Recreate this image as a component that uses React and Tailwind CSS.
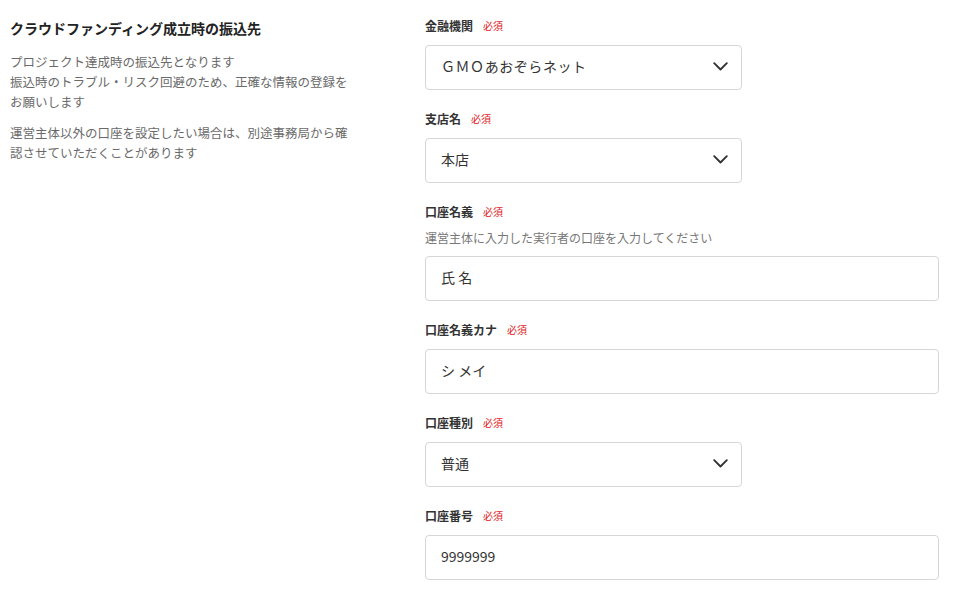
import React from "react";

const font = {
  fontFamily: '"Noto Sans CJK JP", "Noto Sans", "Liberation Sans", sans-serif',
};

function Chevron() {
  return (
    <svg width="15" height="9" viewBox="0 0 15 9" fill="none" className="shrink-0">
      <polyline
        points="1.2,1.2 7.5,7.5 13.8,1.2"
        stroke="#333333"
        strokeWidth="1.9"
        strokeLinecap="round"
        strokeLinejoin="round"
      />
    </svg>
  );
}

function FieldLabel({ children }) {
  return (
    <div className="flex items-center h-5 leading-5">
      <span className="text-[12px] font-bold text-[#333]">{children}</span>
      <span className="ml-[10px] text-[10px] text-[#e0201b]">必須</span>
    </div>
  );
}

function SelectBox({ value, letterSpaced }) {
  return (
    <div className="w-[317px] h-[45px] mt-[9px] flex items-center justify-between pl-[15px] pr-[13px] pb-[2px] border border-[#d6d6d9] rounded-[4px] bg-white">
      <span
        className={`text-[14px] text-[#333] ${letterSpaced ? "tracking-[0.04em]" : ""}`}
      >
        {value}
      </span>
      <Chevron />
    </div>
  );
}

function TextBox({ value }) {
  return (
    <div className="w-[514px] h-[45px] mt-[9px] flex items-center pl-[15px] pb-[2px] border border-[#d6d6d9] rounded-[4px] bg-white">
      <span className="text-[14px] text-[#333]">{value}</span>
    </div>
  );
}

export default function App() {
  return (
    <div className="bg-white min-h-screen flex px-[10px] pt-4" style={font}>
      <div className="w-[415px] shrink-0">
        <h2 className="text-[14px] font-bold text-[#222] leading-[24px]">
          クラウドファンディング成立時の振込先
        </h2>
        <div className="mt-[12px] w-[342px] text-[12.5px] leading-[20px] text-[#6a6a6a]">
          <p>
            プロジェクト達成時の振込先となります
            <br />
            振込時のトラブル・リスク回避のため、正確な情報の登録をお願いします
          </p>
          <p className="mt-[11px]">
            運営主体以外の口座を設定したい場合は、別途事務局から確認させていただくことがあります
          </p>
        </div>
      </div>

      <div className="flex flex-col gap-[19px]">
        <div>
          <FieldLabel>金融機関</FieldLabel>
          <SelectBox value="ＧＭＯあおぞらネット" letterSpaced />
        </div>

        <div>
          <FieldLabel>支店名</FieldLabel>
          <SelectBox value="本店" />
        </div>

        <div>
          <FieldLabel>口座名義</FieldLabel>
          <p className="mt-[7px] text-[12px] leading-[18px] text-[#777]">
            運営主体に入力した実行者の口座を入力してください
          </p>
          <TextBox value="氏 名" />
        </div>

        <div>
          <FieldLabel>口座名義カナ</FieldLabel>
          <TextBox value="シ メイ" />
        </div>

        <div>
          <FieldLabel>口座種別</FieldLabel>
          <SelectBox value="普通" />
        </div>

        <div>
          <FieldLabel>口座番号</FieldLabel>
          <TextBox value="9999999" />
        </div>
      </div>
    </div>
  );
}
